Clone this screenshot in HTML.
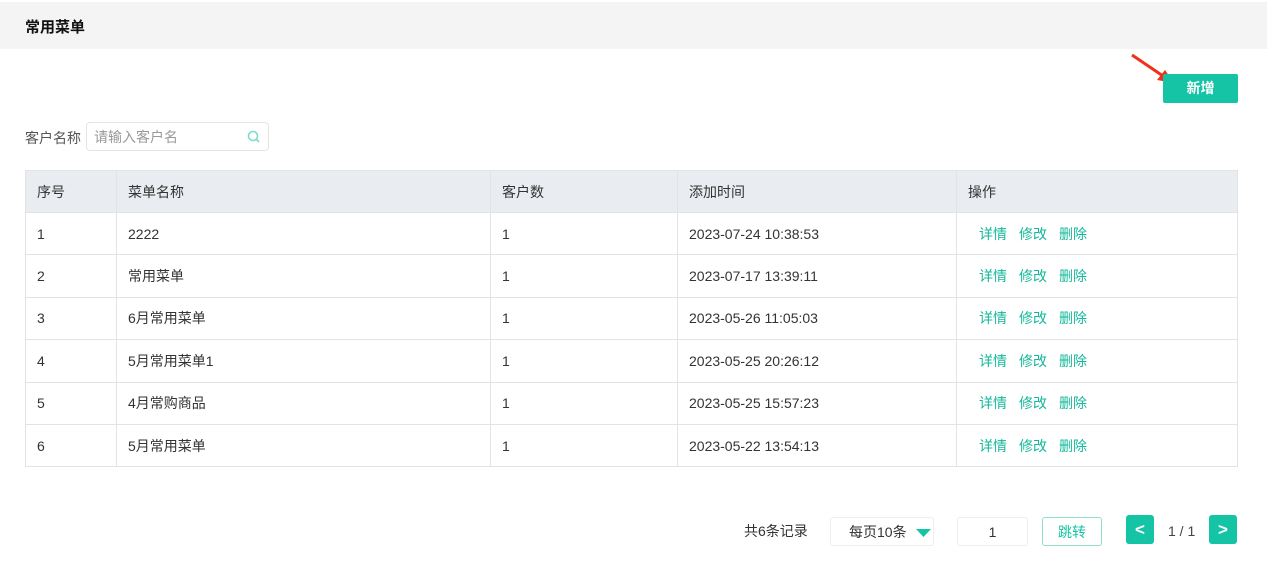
<!DOCTYPE html><html><head><meta charset="utf-8"><style>
body{margin:0;width:1267px;height:568px;background:#fff;font-family:"Liberation Sans","Noto Sans CJK SC",sans-serif;font-size:14px;color:#333;position:relative;overflow:hidden}
.hd{position:absolute;left:0;top:2px;width:1267px;height:47px;background:#f4f4f4}
.hd span{position:absolute;left:25px;top:14px;font-size:15px;font-weight:bold;color:#111}
.btn{position:absolute;left:1163px;top:74px;width:75px;height:29px;background:#14c4a4;border-radius:2px;color:#fff;font-weight:bold;text-align:center;line-height:29px;font-size:14px}
.lbl{position:absolute;left:25px;top:128px;color:#555;font-size:14px}
.inp{position:absolute;left:86px;top:122px;width:183px;height:29px;border:1px solid #e4e4e4;border-radius:4px;color:#999;line-height:28px;box-sizing:border-box;padding-left:7px}
table{position:absolute;left:25px;top:170px;width:1213px;border-collapse:collapse}
td{border:1px solid #e0e3e8;height:42.4px;padding:0 0 0 11px;box-sizing:border-box;font-size:14px;line-height:20px;vertical-align:middle}
tr:first-child td{background:#e9ecf0;color:#333;height:42px}
td.op span{color:#14b89a;margin-left:11px;margin-right:1px}
.pg{position:absolute;top:517px;height:29px;box-sizing:border-box;line-height:29px;font-size:14px}
</style></head><body>
<div class="hd"><span>常用菜单</span></div>
<svg style="position:absolute;left:1128px;top:52px" width="50" height="34"><line x1="4" y1="3" x2="38" y2="26" stroke="#f03018" stroke-width="3"/><polygon points="46,31 29,28 37,18" fill="#f03018"/></svg>
<div class="btn">新增</div>
<div class="lbl">客户名称</div>
<div class="inp">请输入客户名<svg style="position:absolute;right:8px;top:7px" width="13" height="13"><circle cx="6" cy="6" r="4.5" fill="none" stroke="#7fdcc8" stroke-width="1.6"/><line x1="9.5" y1="9.5" x2="12" y2="12" stroke="#7fdcc8" stroke-width="1.6"/></svg></div>
<table>
<colgroup><col style="width:91px"><col style="width:374px"><col style="width:187px"><col style="width:279px"><col></colgroup>
<tr><td>序号</td><td>菜单名称</td><td>客户数</td><td>添加时间</td><td>操作</td></tr>
<tr><td>1</td><td>2222</td><td>1</td><td>2023-07-24 10:38:53</td><td class="op"><span>详情</span><span>修改</span><span>删除</span></td></tr>
<tr><td>2</td><td>常用菜单</td><td>1</td><td>2023-07-17 13:39:11</td><td class="op"><span>详情</span><span>修改</span><span>删除</span></td></tr>
<tr><td>3</td><td>6月常用菜单</td><td>1</td><td>2023-05-26 11:05:03</td><td class="op"><span>详情</span><span>修改</span><span>删除</span></td></tr>
<tr><td>4</td><td>5月常用菜单1</td><td>1</td><td>2023-05-25 20:26:12</td><td class="op"><span>详情</span><span>修改</span><span>删除</span></td></tr>
<tr><td>5</td><td>4月常购商品</td><td>1</td><td>2023-05-25 15:57:23</td><td class="op"><span>详情</span><span>修改</span><span>删除</span></td></tr>
<tr><td>6</td><td>5月常用菜单</td><td>1</td><td>2023-05-22 13:54:13</td><td class="op"><span>详情</span><span>修改</span><span>删除</span></td></tr>
</table>
<div class="pg" style="left:744px">共6条记录</div>
<div class="pg" style="left:830px;width:104px;border:1px solid #eee;border-radius:3px;padding-left:18px">每页10条<svg style="position:absolute;right:2px;top:11px" width="15" height="9"><polygon points="0,0 15,0 7.5,8" fill="#14c4a4"/></svg></div>
<div class="pg" style="left:957px;width:71px;border:1px solid #eee;border-radius:3px;text-align:center">1</div>
<div class="pg" style="left:1042px;width:60px;border:1px solid #8fe0cf;border-radius:3px;text-align:center;color:#14c4a4">跳转</div>
<div class="pg" style="left:1126px;top:515px;width:28px;background:#14c4a4;border-radius:3px;color:#fff;text-align:center;font-weight:bold;font-size:17px">&lt;</div>
<div class="pg" style="left:1168px;color:#444">1 / 1</div>
<div class="pg" style="left:1209px;top:515px;width:28px;background:#14c4a4;border-radius:3px;color:#fff;text-align:center;font-weight:bold;font-size:17px">&gt;</div>
</body></html>
